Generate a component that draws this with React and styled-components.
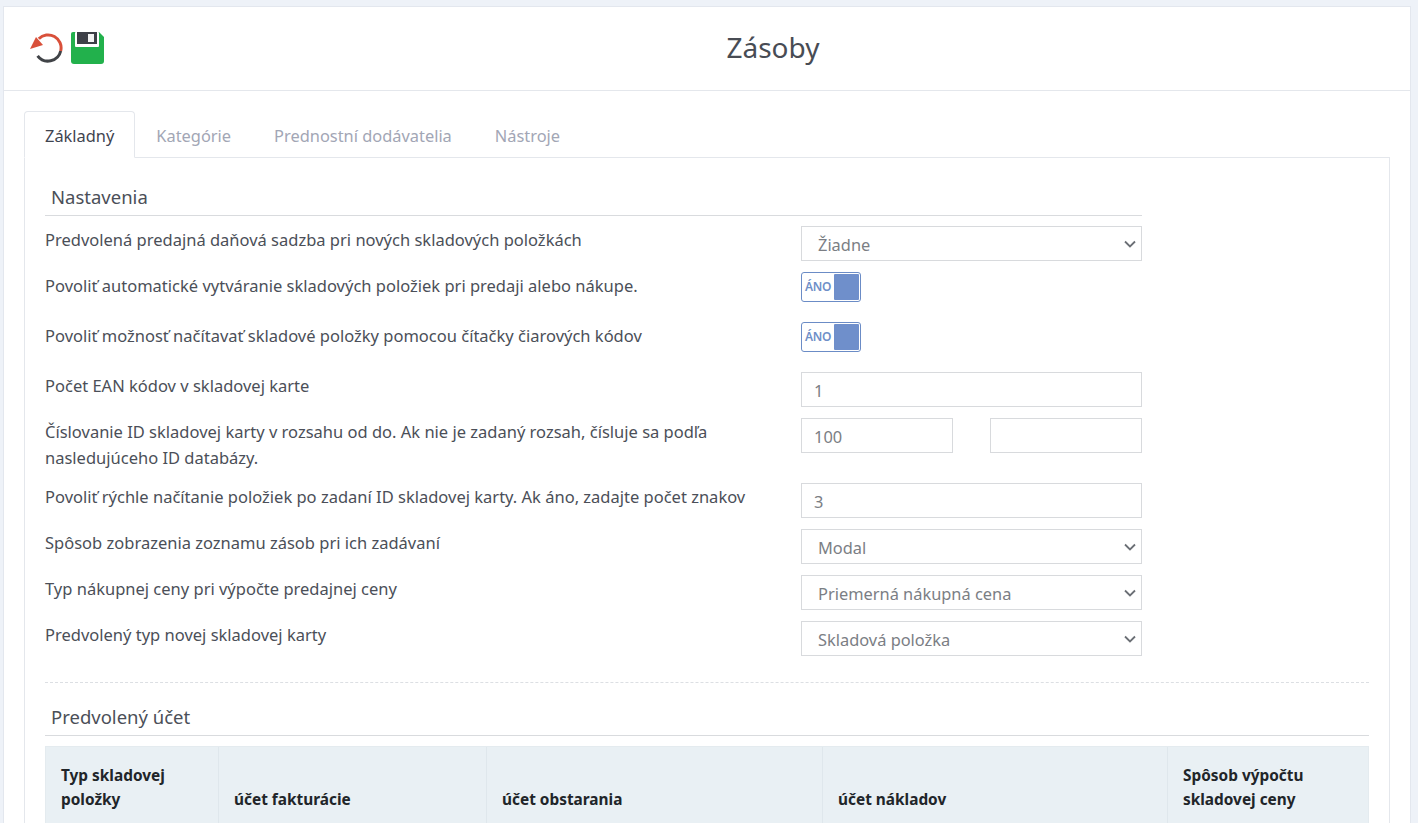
import React from "react";
import styled, { createGlobalStyle } from "styled-components";

const Global = createGlobalStyle`
  html, body { margin: 0; padding: 0; height: 823px; overflow: hidden; background: #eef2f8; }
  body { font-family: "Noto Sans", "Open Sans", sans-serif; color: #4b4f58; }
`;
const Page = styled.div`
  padding: 6px 7px 0 3px;
  height: 817px;
  overflow: hidden;
`;
const Card = styled.div`
  background: #fff;
  border: 1px solid #e3e7ee;
  border-bottom: 0;
  height: 817px;
  box-sizing: border-box;
`;
const Header = styled.header`
  height: 84px;
  box-sizing: border-box;
  border-bottom: 1px solid #e4e7ec;
  padding: 25px 0 0 26px;
  display: flex;
  align-items: flex-start;
`;
const Tools = styled.div`
  display: flex;
  gap: 8px;
  align-items: flex-start;
`;
const Title = styled.h1`
  flex: 1;
  margin: -4px 0 0;
  padding-left: 32px;
  text-align: center;
  font-size: 28px;
  font-weight: 400;
  color: #484c54;
  line-height: 38px;
`;
const Body = styled.div`
  padding: 20px 20px 0 20px;
`;
const Tabs = styled.div`
  display: flex;
  height: 47px;
  box-sizing: border-box;
  position: relative;
  z-index: 1;
`;
const Tab = styled.div`
  box-sizing: border-box;
  height: 47px;
  padding: ${p => (p.$active ? "2px 20px 0" : "2px 21px 0 20px")};
  display: flex;
  align-items: center;
  font-size: 16.4px;
  color: ${p => (p.$active ? "#3f4450" : "#a2a6b5")};
  border: 1px solid ${p => (p.$active ? "#e4e7ec" : "transparent")};
  border-bottom: 1px solid ${p => (p.$active ? "#fff" : "transparent")};
  border-radius: 4px 4px 0 0;
  background: ${p => (p.$active ? "#fff" : "transparent")};
`;
const Panel = styled.div`
  border: 1px solid #e4e7ec;
  border-bottom: 0;
  margin-top: -1px;
  padding: 21px 20px 0 20px;
  height: 700px;
  box-sizing: border-box;
`;
const Settings = styled.div`
  width: 1097px;
`;
const SectionTitle = styled.h2`
  margin: 0;
  font-size: 18.5px;
  font-weight: 400;
  color: #4b4f58;
  line-height: 36px;
  height: 37px;
  padding-left: 6px;
  box-sizing: border-box;
  border-bottom: 1px solid #d9dbde;
`;
const Rows = styled.div`
  padding-top: 10px;
`;
const Row = styled.div`
  display: grid;
  grid-template-columns: 756px 341px;
  padding-bottom: ${p => p.$gap ?? 11}px;
`;
const Label = styled.div`
  font-size: 16.5px;
  line-height: ${p => (p.$wrap ? 26 : 28)}px;
  padding-top: ${p => (p.$wrap ? 1 : 0)}px;
  color: #4b4f58;
  width: 710px;
  white-space: ${p => (p.$wrap ? "normal" : "nowrap")};
`;
const Field = styled.div`
  display: flex;
  justify-content: space-between;
`;
const Input = styled.div`
  box-sizing: border-box;
  height: 35px;
  width: ${p => p.$w ?? "341px"};
  border: 1px solid #d8dadd;
  padding-left: 12px;
  font-size: 16.4px;
  line-height: 36px;
  color: #7b7e84;
  background: #fff;
`;
const SelectBox = styled(Input)`
  position: relative;
  padding-left: 16px;
`;
const Chevron = styled.svg`
  position: absolute;
  right: 5px;
  top: 13px;
`;
const Toggle = styled.div`
  box-sizing: border-box;
  width: 60px;
  height: 30px;
  border: 1px solid #6b8cc6;
  border-radius: 3px;
  padding: 1px;
  display: flex;
  justify-content: space-between;
  align-items: stretch;
`;
const ToggleText = styled.span`
  font-size: 12px;
  font-weight: 600;
  color: #6f8fc8;
  line-height: 26px;
  padding-left: 2px;
  letter-spacing: -0.3px;
`;
const Knob = styled.span`
  width: 25px;
  background: #6f8fcb;
  border-radius: 1px;
`;
const Divider = styled.hr`
  border: 0;
  border-top: 1px dashed #dcdfe3;
  margin: 15px 0 16px;
`;
const Table = styled.div`
  margin-top: 10px;
  display: grid;
  grid-template-columns: 172px 268px 336px 345px 201px;
  background: #e9f0f4;
  border: 1px solid #e4ebef;
  border-bottom: 0;
  box-sizing: border-box;
  width: 1324px;
`;
const Th = styled.div`
  box-sizing: border-box;
  padding: 17px 15px 16px 15px;
  font-size: 15.4px;
  font-weight: 700;
  line-height: 24px;
  color: #212529;
  display: flex;
  align-items: flex-end;
  border-left: ${p => (p.$first ? "0" : "1px solid #dfe7ec")};
`;

const Undo = () => (
  <svg width="33" height="32" viewBox="0 0 33 32">
    <path d="M8.8 6.8 A13 13 0 0 1 30.7 19" fill="none" stroke="#d9503a" strokeWidth="3" />
    <path d="M30.7 19 A13 13 0 0 1 7.6 23.8" fill="none" stroke="#404347" strokeWidth="3" />
    <path d="M0 17 L6 5 L13 13 Z" fill="#d9503a" />
  </svg>
);
const Save = () => (
  <svg width="33" height="32" viewBox="0 0 33 32">
    <path d="M2 0 H28 L33 5 V29 A3 3 0 0 1 30 32 H3 A3 3 0 0 1 0 29 V2 A2 2 0 0 1 2 0 Z" fill="#22b14c" />
    <rect x="4" y="0" width="24" height="15" rx="1" fill="#fff" />
    <rect x="6" y="0" width="20" height="12" fill="#3d4047" />
    <rect x="17" y="2" width="6" height="8" fill="#f3f3f3" />
  </svg>
);
const Select = ({ value }) => (
  <SelectBox>
    {value}
    <Chevron width="12" height="8" viewBox="0 0 12 8">
      <path d="M1 1.5 L6 6.5 L11 1.5" fill="none" stroke="#6b6f75" strokeWidth="1.8" />
    </Chevron>
  </SelectBox>
);
const Yes = () => (
  <Toggle>
    <ToggleText>ÁNO</ToggleText>
    <Knob />
  </Toggle>
);

export default function App() {
  return (
    <Page>
      <Global />
      <Card>
        <Header>
          <Tools>
            <Undo />
            <Save />
          </Tools>
          <Title>Zásoby</Title>
        </Header>
        <Body>
          <Tabs>
            <Tab $active>Základný</Tab>
            <Tab>Kategórie</Tab>
            <Tab>Prednostní dodávatelia</Tab>
            <Tab>Nástroje</Tab>
          </Tabs>
          <Panel>
            <Settings>
              <SectionTitle>Nastavenia</SectionTitle>
              <Rows>
                <Row>
                  <Label>Predvolená predajná daňová sadzba pri nových skladových položkách</Label>
                  <Select value="Žiadne" />
                </Row>
                <Row $gap={20}>
                  <Label>Povoliť automatické vytváranie skladových položiek pri predaji alebo nákupe.</Label>
                  <Yes />
                </Row>
                <Row $gap={20}>
                  <Label>Povoliť možnosť načítavať skladové položky pomocou čítačky čiarových kódov</Label>
                  <Yes />
                </Row>
                <Row>
                  <Label>Počet EAN kódov v skladovej karte</Label>
                  <Input>1</Input>
                </Row>
                <Row $gap={12}>
                  <Label $wrap>Číslovanie ID skladovej karty v rozsahu od do. Ak nie je zadaný rozsah, čísluje sa podľa nasledujúceho ID databázy.</Label>
                  <Field>
                    <Input $w="152px">100</Input>
                    <Input $w="152px" />
                  </Field>
                </Row>
                <Row>
                  <Label>Povoliť rýchle načítanie položiek po zadaní ID skladovej karty. Ak áno, zadajte počet znakov</Label>
                  <Input>3</Input>
                </Row>
                <Row>
                  <Label>Spôsob zobrazenia zoznamu zásob pri ich zadávaní</Label>
                  <Select value="Modal" />
                </Row>
                <Row>
                  <Label>Typ nákupnej ceny pri výpočte predajnej ceny</Label>
                  <Select value="Priemerná nákupná cena" />
                </Row>
                <Row>
                  <Label>Predvolený typ novej skladovej karty</Label>
                  <Select value="Skladová položka" />
                </Row>
              </Rows>
            </Settings>
            <Divider />
            <SectionTitle>Predvolený účet</SectionTitle>
            <Table>
              <Th $first>Typ skladovej položky</Th>
              <Th>účet fakturácie</Th>
              <Th>účet obstarania</Th>
              <Th>účet nákladov</Th>
              <Th>Spôsob výpočtu skladovej ceny</Th>
            </Table>
          </Panel>
        </Body>
      </Card>
    </Page>
  );
}
